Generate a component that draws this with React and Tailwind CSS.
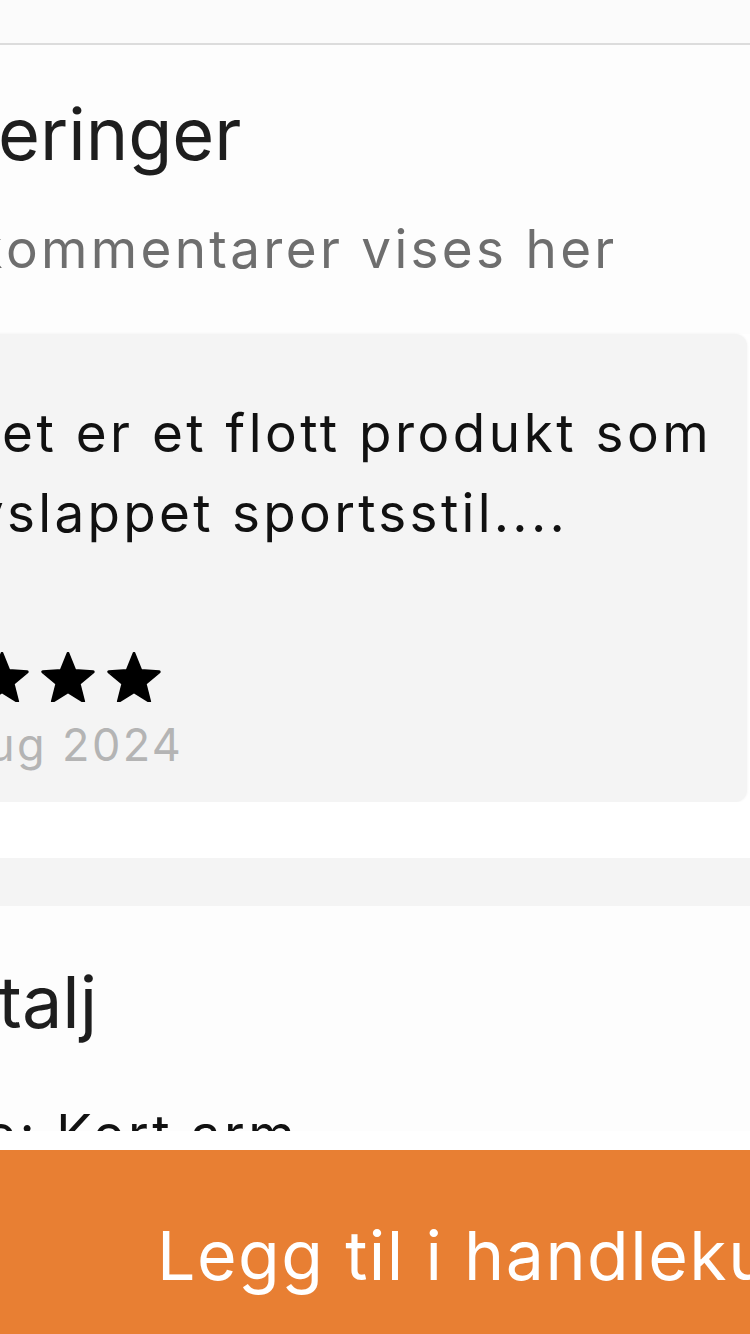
import React from "react";

function Star() {
  const R = 26.5;
  const r = 26.5 * 0.44;
  const cx = 27;
  const cy = 28;
  const pts = [];
  for (let i = 0; i < 10; i++) {
    const rad = i % 2 === 0 ? R : r;
    const a = (Math.PI / 5) * i - Math.PI / 2;
    pts.push(`${(cx + rad * Math.cos(a)).toFixed(2)},${(cy + rad * Math.sin(a)).toFixed(2)}`);
  }
  return (
    <svg width="54" height="50" viewBox="0 0 54 50" className="shrink-0">
      <polygon points={pts.join(" ")} fill="#000" stroke="#000" strokeWidth="3" strokeLinejoin="round" />
    </svg>
  );
}

export default function App() {
  return (
    <div
      className="w-[750px] h-[1334px] overflow-hidden flex flex-col bg-white"
      style={{ fontFamily: "Inter, 'Noto Sans', 'Liberation Sans', sans-serif" }}
    >
      {/* scroll area */}
      <div className="h-[1131px] overflow-hidden flex flex-col shrink-0">
        {/* top strip */}
        <div className="h-[45px] shrink-0 bg-[#fbfbfb] border-b-2 border-[#dcdcdc]" />

        {/* reviews header */}
        <div className="shrink-0 bg-[#fdfdfd] pt-[45px] pb-[53px]">
          <div className="-ml-[502px] whitespace-nowrap text-[72px] leading-[88px] text-[#1e1e1e]">
            <span className="inline-block w-[500px] text-right">Vurd</span>eringer
          </div>
          <div className="mt-[39px] -ml-[494px] whitespace-nowrap text-[53px] leading-[64px] tracking-[3.3px] text-[#6e6e6e]">
            <span className="inline-block w-[500px] text-right">Alle k</span>ommentarer vises her
          </div>
        </div>

        {/* review card */}
        <div className="shrink-0 -ml-[20px] mr-[3px] rounded-[12px] bg-[#f4f4f4] shadow-[0_0_3px_rgba(0,0,0,0.06)] pt-[59px] pb-[30px]">
          <div className="-ml-[478px] whitespace-nowrap text-[53px] leading-[80px] tracking-[3.5px] text-[#111111]">
            <span className="inline-block w-[500px] text-right">Produk</span>et er et flott produkt som
          </div>
          <div className="-ml-[473px] whitespace-nowrap text-[53px] leading-[80px] tracking-[3.3px] text-[#111111]">
            <span className="inline-block w-[500px] text-right">gir en av</span>slappet sportsstil....
          </div>
          <div className="mt-[99px] -ml-[137px] flex gap-[12px]">
            <Star />
            <Star />
            <Star />
            <Star />
            <Star />
          </div>
          <div className="mt-[16px] -ml-[492px] whitespace-nowrap text-[45px] leading-[54px] tracking-[2.4px] text-[#b4b4b4]">
            <span className="inline-block w-[500px] text-right">12. a</span>ug 2024
          </div>
        </div>

        <div className="h-[56px] shrink-0 bg-white" />
        <div className="h-[48px] shrink-0 bg-[#f4f4f4]" />

        {/* detail section */}
        <div className="shrink-0 bg-[#fdfdfd] pt-[52px]">
          <div className="-ml-[502px] whitespace-nowrap text-[72px] leading-[88px] text-[#1e1e1e]">
            <span className="inline-block w-[500px] text-right">De</span>talj
          </div>
          <div className="mt-[56px] -ml-[462px] whitespace-nowrap text-[53px] leading-[64px] tracking-[3.3px] text-[#111111]">
            <span className="inline-block w-[500px] text-right">Ermelengde:</span>{"\u00a0"}Kort arm
          </div>
        </div>
      </div>

      <div className="h-[19px] shrink-0 bg-white" />

      {/* bottom button */}
      <div className="h-[184px] shrink-0 bg-[#e87f33] pt-[64px] pl-[157px] overflow-hidden">
        <div className="whitespace-nowrap text-[68px] leading-[82px] tracking-[1.5px] text-white">Legg til i handlekurv</div>
      </div>
    </div>
  );
}
